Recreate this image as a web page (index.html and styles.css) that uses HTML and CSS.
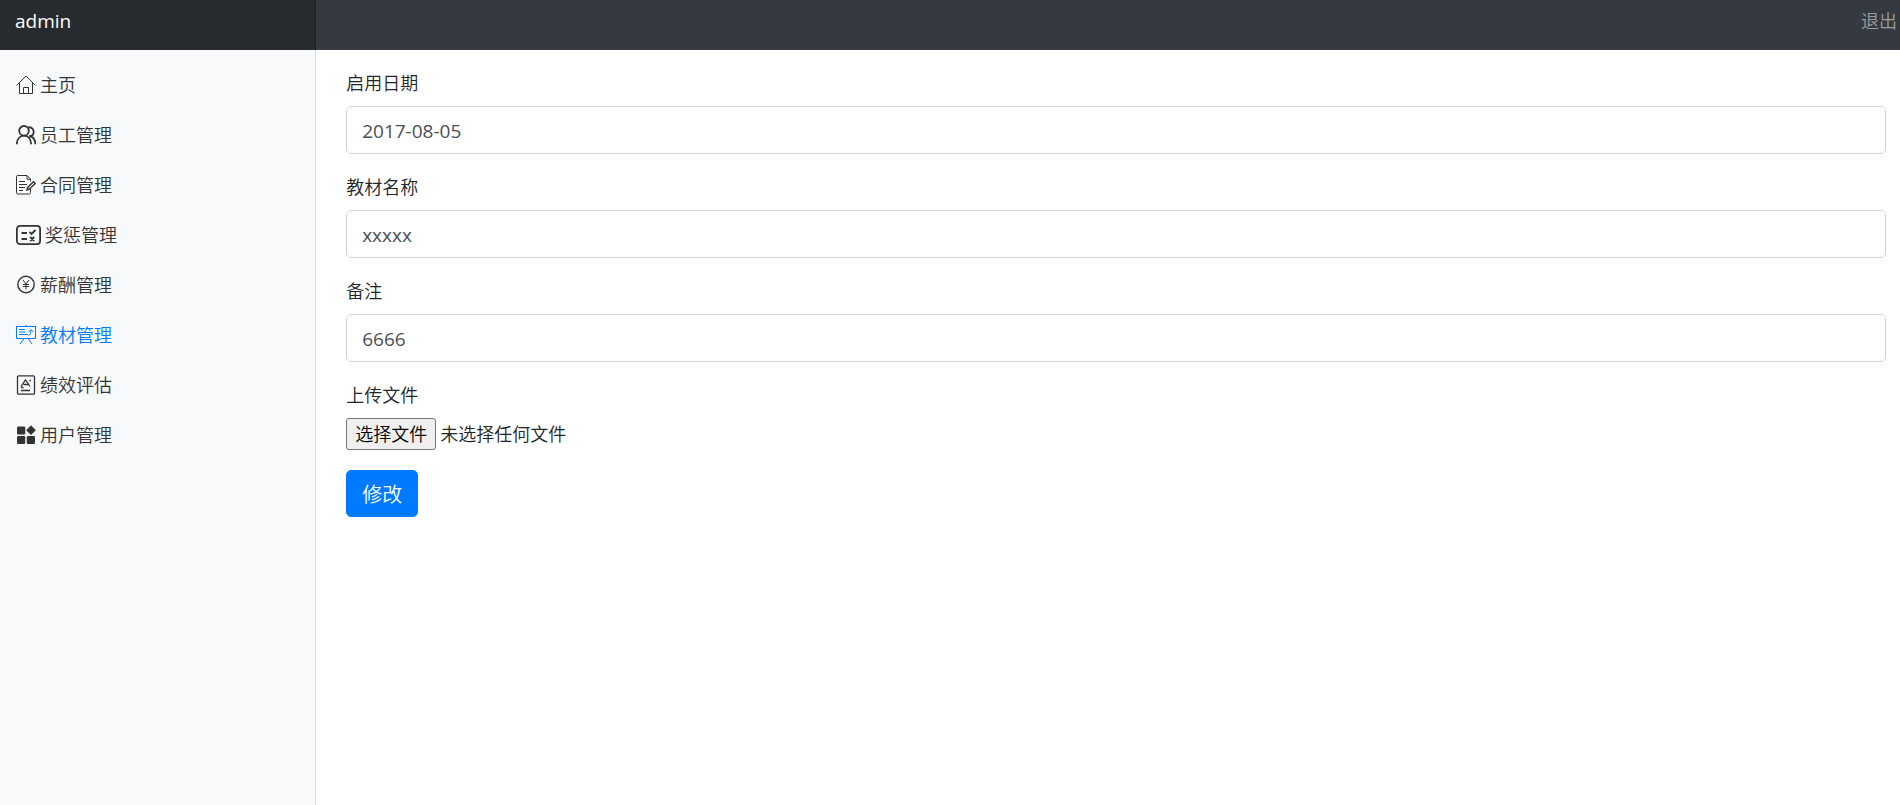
FILE: index.html
```html
<!DOCTYPE html>
<html lang="zh-CN">
<head>
  <meta charset="utf-8">
  <title>教材管理</title>
  <link rel="stylesheet" href="styles.css">
</head>
<body>
  <nav class="navbar">
    <a class="navbar-brand" href="#">admin</a>
    <a class="navbar-link" href="#">退出</a>
  </nav>

  <div class="wrapper">
    <nav class="sidebar">
      <ul class="nav">
        <li>
          <a class="nav-link" href="#">
            <svg class="icon icon-thin" viewBox="0 0 20 20">
              <path d="M.5 10.5 10 1l9.500 9.500M3.500 8v10.500h13V8M7.500 18.500v-6h5v6"/>
            </svg>
            主页
          </a>
        </li>
        <li>
          <a class="nav-link" href="#">
            <svg class="icon icon-bold" viewBox="0 0 20 20">
              <circle cx="8" cy="5.800" r="4.800"/>
              <path d="M.8 19.300c.2-5.200 3-8.600 7.200-8.600s7 3.400 7.200 8.600M12.300 2.300c3.200-.3 5.400 1.600 5.400 4.400 0 2.600-1.700 4.500-4.500 4.500 3.900.5 6.100 3.400 6.300 8.100"/>
            </svg>
            员工管理
          </a>
        </li>
        <li>
          <a class="nav-link" href="#">
            <svg class="icon icon-thin" viewBox="0 0 20 20">
              <path d="M14.500 14v3.500c0 .9-.5 1.500-1.500 1.500H1.800C1 19 .5 18.500.5 17.800V1.800C.5 1 1 .5 1.800.5h9.200l3.500 3.500v2.500M11 .8v3.500h3.500M3 6.500h6M3 9.500h8M3 12.500h6M3 15.500h4"/>
              <path class="stroke-bold" d="m11 15 .8-2.800 5.700-5.400 1.700 1.700-5.700 5.500z"/>
            </svg>
            合同管理
          </a>
        </li>
        <li>
          <a class="nav-link" href="#">
            <svg class="icon icon-wide icon-bold" viewBox="0 0 25 20">
              <rect x=".9" y=".9" width="23.200" height="18.200" rx="3.200"/>
              <path d="M5.500 8H11M5.500 14H11M13.500 7l2 2 4-4M14.200 12l4 4M18.200 12l-4 4"/>
            </svg>
            奖惩管理
          </a>
        </li>
        <li>
          <a class="nav-link" href="#">
            <svg class="icon icon-thin" viewBox="0 0 20 20">
              <circle class="stroke-bold" cx="10" cy="9.500" r="8.200"/>
              <path d="m7 5 3 4 3-4M10 9v5.500M7 9.500h6M7 11.500h6"/>
            </svg>
            薪酬管理
          </a>
        </li>
        <li>
          <a class="nav-link active" href="#">
            <svg class="icon icon-thin" viewBox="0 0 20 20">
              <path d="M0 1.500h20M.5 1.500v12h19v-12M10 0v1.500M8 13.500l-4 5.500M12 13.500l4 5.500M3 4.500h6M3 7h6M3 9.500h9M12.500 10.500c1.500-.5 2.500-2 2.500-5.500M12.500 7 15 4.500 17.500 7"/>
            </svg>
            教材管理
          </a>
        </li>
        <li>
          <a class="nav-link" href="#">
            <svg class="icon" viewBox="0 0 20 20">
              <rect x="1.500" y=".8" width="17" height="18.400" rx="1.200"/>
              <path d="m5 11.500 4.500-6.500 4.500 6.500M7.500 9.500H12M13.500 5.500H15M5 12.500h2.500M5 15.500h9"/>
            </svg>
            绩效评估
          </a>
        </li>
        <li>
          <a class="nav-link" href="#">
            <svg class="icon icon-solid" viewBox="0 0 20 20">
              <rect x="1" y="1.500" width="8.200" height="8" rx="1.200"/>
              <rect x="1" y="11" width="8.200" height="8" rx="1.200"/>
              <rect x="10.800" y="11" width="8.200" height="8" rx="1.200"/>
              <path d="M15 .3 19.900 5.200 15 10.100 10.100 5.200z"/>
            </svg>
            用户管理
          </a>
        </li>
      </ul>
    </nav>

    <main class="main">
      <form>
        <div class="form-group">
          <label for="start-date">启用日期</label>
          <input class="form-control" type="text" id="start-date" value="2017-08-05">
        </div>
        <div class="form-group">
          <label for="book-name">教材名称</label>
          <input class="form-control" type="text" id="book-name" value="xxxxx">
        </div>
        <div class="form-group">
          <label for="remark">备注</label>
          <input class="form-control" type="text" id="remark" value="6666">
        </div>
        <div class="form-group">
          <label for="book-file">上传文件</label>
          <div class="file-row">
            <input class="file-input" type="file" id="book-file">
            <label class="file-button" for="book-file">选择文件</label>
            <span>未选择任何文件</span>
          </div>
        </div>
        <button class="btn" type="submit">修改</button>
      </form>
    </main>
  </div>
</body>
</html>
```
FILE: styles.css
```css
* {
  box-sizing: border-box;
}

body {
  margin: 0;
  min-height: 100vh;
  display: flex;
  flex-direction: column;
  font-family: "Open Sans", "Noto Sans CJK SC", sans-serif;
  font-size: 18px;
  font-weight: 350;
  line-height: 26px;
  color: #212529;
  background-color: #fff;
}

a {
  text-decoration: none;
}

.navbar {
  display: flex;
  justify-content: space-between;
  height: 50px;
  background-color: #343a40;
}

.navbar-brand {
  width: 16.64%;
  padding: 8px 15px;
  font-size: 19px;
  font-weight: 400;
  color: #fff;
  background-color: rgba(0, 0, 0, 0.25);
  box-shadow: inset -1px 0 0 rgba(0, 0, 0, 0.25);
}

.navbar-link {
  padding: 8px 3px;
  color: rgba(255, 255, 255, 0.5);
}

.wrapper {
  display: flex;
  flex: 1;
}

.sidebar {
  width: 16.64%;
  padding-top: 10px;
  background-color: #f8f9fb;
  box-shadow: inset -1px 0 0 rgba(0, 0, 0, 0.1);
}

.nav {
  margin: 0;
  padding: 0;
  list-style: none;
}

.nav-link {
  display: flex;
  align-items: center;
  gap: 4px;
  padding: 12px 16px;
  color: #333;
}

.nav-link.active {
  color: #007bff;
}

.icon {
  width: 20px;
  height: 20px;
  fill: none;
  stroke: currentColor;
  stroke-width: 1.3;
}

.icon-wide {
  width: 25px;
}

.icon-thin {
  stroke-width: 1;
}

.icon-bold {
  stroke-width: 1.8;
}

.icon-solid {
  fill: currentColor;
  stroke: none;
}

.stroke-bold {
  stroke-width: 1.4;
}

.main {
  flex: 1;
  padding: 20px 14px 20px 30px;
}

.form-group {
  margin-bottom: 20px;
}

.form-group > label {
  display: block;
  margin-bottom: 10px;
}

.form-control {
  display: block;
  width: 100%;
  height: 48px;
  padding: 10px 15px 8px;
  border: 1px solid #ced4da;
  border-radius: 5px;
  font-family: inherit;
  font-size: 19px;
  font-weight: 400;
  color: #495057;
}

.file-row {
  display: flex;
  align-items: center;
  gap: 4px;
}

/* the visible button is the label */
.file-input {
  position: absolute;
  width: 1px;
  height: 1px;
  opacity: 0;
}

.file-button {
  padding: 2px 8px;
  border: 1px solid #767676;
  border-radius: 3px;
  color: #000;
  background-color: #efefef;
}

.btn {
  height: 47px;
  padding: 0 15px;
  border: 1px solid #007bff;
  border-radius: 5px;
  font-family: inherit;
  font-size: 20px;
  font-weight: 350;
  color: #fff;
  background-color: #007bff;
}
```
